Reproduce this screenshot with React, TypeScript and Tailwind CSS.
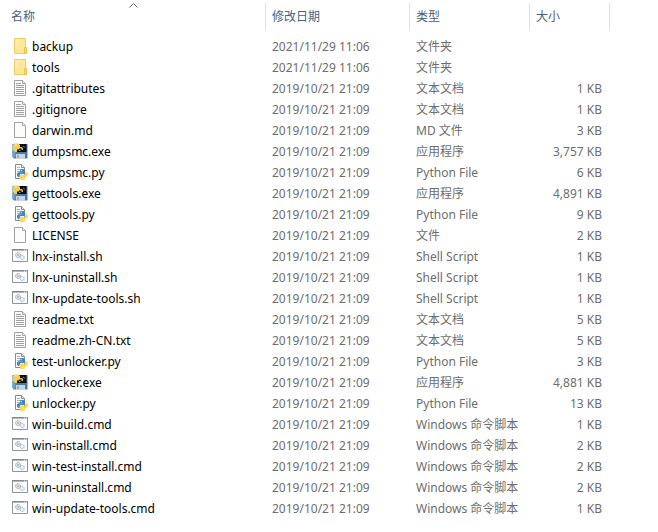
import React, { useState } from 'react'
import clsx from 'clsx'

type IconKind = 'folder' | 'text' | 'blank' | 'exe' | 'python' | 'script'
type ColumnKey = 'name' | 'modified' | 'type' | 'size'

interface FileEntry {
  name: string
  modified: string
  type: string
  size: number | null
  icon: IconKind
}

const FOLDER_DATE = '2021/11/29 11:06'
const FILE_DATE = '2019/10/21 21:09'

const files: FileEntry[] = [
  { name: 'backup', modified: FOLDER_DATE, type: '文件夹', size: null, icon: 'folder' },
  { name: 'tools', modified: FOLDER_DATE, type: '文件夹', size: null, icon: 'folder' },
  { name: '.gitattributes', modified: FILE_DATE, type: '文本文档', size: 1, icon: 'text' },
  { name: '.gitignore', modified: FILE_DATE, type: '文本文档', size: 1, icon: 'text' },
  { name: 'darwin.md', modified: FILE_DATE, type: 'MD 文件', size: 3, icon: 'blank' },
  { name: 'dumpsmc.exe', modified: FILE_DATE, type: '应用程序', size: 3757, icon: 'exe' },
  { name: 'dumpsmc.py', modified: FILE_DATE, type: 'Python File', size: 6, icon: 'python' },
  { name: 'gettools.exe', modified: FILE_DATE, type: '应用程序', size: 4891, icon: 'exe' },
  { name: 'gettools.py', modified: FILE_DATE, type: 'Python File', size: 9, icon: 'python' },
  { name: 'LICENSE', modified: FILE_DATE, type: '文件', size: 2, icon: 'blank' },
  { name: 'lnx-install.sh', modified: FILE_DATE, type: 'Shell Script', size: 1, icon: 'script' },
  { name: 'lnx-uninstall.sh', modified: FILE_DATE, type: 'Shell Script', size: 1, icon: 'script' },
  { name: 'lnx-update-tools.sh', modified: FILE_DATE, type: 'Shell Script', size: 1, icon: 'script' },
  { name: 'readme.txt', modified: FILE_DATE, type: '文本文档', size: 5, icon: 'text' },
  { name: 'readme.zh-CN.txt', modified: FILE_DATE, type: '文本文档', size: 5, icon: 'text' },
  { name: 'test-unlocker.py', modified: FILE_DATE, type: 'Python File', size: 3, icon: 'python' },
  { name: 'unlocker.exe', modified: FILE_DATE, type: '应用程序', size: 4881, icon: 'exe' },
  { name: 'unlocker.py', modified: FILE_DATE, type: 'Python File', size: 13, icon: 'python' },
  { name: 'win-build.cmd', modified: FILE_DATE, type: 'Windows 命令脚本', size: 1, icon: 'script' },
  { name: 'win-install.cmd', modified: FILE_DATE, type: 'Windows 命令脚本', size: 2, icon: 'script' },
  { name: 'win-test-install.cmd', modified: FILE_DATE, type: 'Windows 命令脚本', size: 2, icon: 'script' },
  { name: 'win-uninstall.cmd', modified: FILE_DATE, type: 'Windows 命令脚本', size: 2, icon: 'script' },
  { name: 'win-update-tools.cmd', modified: FILE_DATE, type: 'Windows 命令脚本', size: 1, icon: 'script' }
]

const columns: { key: ColumnKey; label: string; width: string }[] = [
  { key: 'name', label: '名称', width: 'w-[266px]' },
  { key: 'modified', label: '修改日期', width: 'w-36' },
  { key: 'type', label: '类型', width: 'w-30' },
  { key: 'size', label: '大小', width: 'w-20' }
]

const FolderIcon: React.FC = () => (
  <>
    <path d="M2.5.5h11v15h-11z" fill="#ffe699" stroke="#f0cd5c" />
    <path d="M3 1h6L3 11z" fill="#ffedb0" />
    <path d="M12.5 9.5h2v6h-2z" fill="#ffe08a" stroke="#e8c04a" />
  </>
)

const PageShape: React.FC = () => (
  <>
    <path d="M2.5.5h8l3 3v12h-11z" fill="#fcfcfc" stroke="#a0a0a0" />
    <path d="M10.5.5v3h3" fill="#ececec" stroke="#a6a6a6" />
  </>
)

const TextIcon: React.FC = () => (
  <>
    <PageShape />
    <path d="M4 3.5h5M4 5.5h8M4 7.5h8M4 9.5h8M4 11.5h8M4 13.5h8" stroke="#a0a0a0" />
  </>
)

// Two interlocking snakes, drawn in a 16x16 box
const PythonMark: React.FC = () => (
  <>
    <path
      d="M7.8 0C4.8 0 4.2 1.2 4.2 2.6v1.6h4v.7H2.6C.9 4.9 0 6.3 0 8.2s.9 3.3 2.4 3.3h1.4V9.6c0-1.5 1.2-2.5 2.6-2.5h3.4c1.2 0 2-.9 2-2.1V2.6C11.8 1 10.5 0 7.8 0z"
      fill="#3f84c4"
    />
    <path
      d="M8.2 16c3 0 3.6-1.2 3.6-2.6v-1.6h-4v-.7h5.6c1.7 0 2.6-1.4 2.6-3.3s-.9-3.3-2.4-3.3h-1.4v1.9c0 1.5-1.2 2.5-2.6 2.5H6.2c-1.2 0-2 .9-2 2.1v2.4C4.2 15 5.5 16 8.2 16z"
      fill="#ffd748"
    />
    <circle cx="6.1" cy="2.3" r=".8" fill="#fff" />
    <circle cx="9.9" cy="13.7" r=".8" fill="#fff" />
  </>
)

const PythonIcon: React.FC = () => (
  <>
    <path d="M3.5.5h6l3 3v11h-9z" fill="#fafafa" stroke="#858a90" />
    <path d="M9.5.5v3h3" fill="#e3e3e3" stroke="#858a90" />
    <path d="M5 3.5h3M5 5.5h6M5 7.5h3M5 9.5h1M5 11.5h1" stroke="#b0b3b6" />
    <svg x="5" y="5" width="11" height="11" viewBox="0 0 16 16">
      <PythonMark />
    </svg>
  </>
)

const ExeIcon: React.FC = () => (
  <>
    <path d="M.5 1H15a.5.5 0 0 1 .5.5V15a.5.5 0 0 1-.5.5H2L.5 14z" fill="#3f7cb2" />
    <path d="M.5 8h3v6.500h-2L.5 13.500z" fill="#6ba1cf" />
    <path d="M5 1h9.500v8H5z" fill="#0c0c0c" />
    <path d="M2 .5h4.500L8 2v3L6.500 6.500H5V9H3L1 7V2z" fill="#f4cf49" />
    <path d="M3 1.500h2v1H3z" fill="#fff3b0" />
    <path d="M8 4h2l1 1v2H9.500V5.500H8z" fill="#e3bd3d" />
    <path d="M11 3l2 1.500" stroke="#747474" />
    <path d="M7 7.500h1.500" stroke="#b99a35" />
    <path d="M4 11h9v5H4z" fill="#cbd3d9" />
    <path d="M5 12h2v3H5z" fill="#a2afb9" />
  </>
)

const ScriptIcon: React.FC = () => (
  <>
    <path d="M.5 1.5h15v12H.5z" fill="#fcfcfc" stroke="#8f9499" />
    <path d="M0 1.5h16" stroke="#858a8f" />
    <path d="M1 2.500h14" stroke="#b3b7ba" />
    <path d="M12 2h1M14 2h1" stroke="#f4f4f4" />
    <circle cx="6" cy="7" r="2.400" fill="#ececec" stroke="#9a9ea2" strokeDasharray="1.300 .5" />
    <circle cx="6" cy="7" r=".8" fill="#fff" stroke="#8d9297" strokeWidth=".6" />
    <circle cx="10.200" cy="9.500" r="2" fill="#e4f2fb" stroke="#8dbbd8" strokeDasharray="1.200 .4" />
    <circle cx="10.200" cy="9.500" r=".6" fill="#fff" />
  </>
)

const iconShapes: Record<IconKind, React.FC> = {
  folder: FolderIcon,
  text: TextIcon,
  blank: PageShape,
  exe: ExeIcon,
  python: PythonIcon,
  script: ScriptIcon
}

const FileIcon: React.FC<{ kind: IconKind }> = ({ kind }) => {
  const Shape = iconShapes[kind]
  return (
    <svg className="mb-px size-4 shrink-0" viewBox="0 0 16 16" aria-hidden="true">
      <Shape />
    </svg>
  )
}

const compareEntries = (a: FileEntry, b: FileEntry, key: ColumnKey) => {
  if (key === 'size') return (a.size ?? 0) - (b.size ?? 0)
  return a[key].localeCompare(b[key], 'zh-CN')
}

const App: React.FC = () => {
  const [sortKey, setSortKey] = useState<ColumnKey>('name')
  const [ascending, setAscending] = useState(true)

  const handleSort = (key: ColumnKey) => {
    setAscending(key === sortKey ? !ascending : true)
    setSortKey(key)
  }

  // Folders always stay above files
  const rows = [...files].sort((a, b) => {
    const folderOrder = Number(b.icon === 'folder') - Number(a.icon === 'folder')
    if (folderOrder !== 0) return folderOrder
    return compareEntries(a, b, sortKey) * (ascending ? 1 : -1)
  })

  return (
    <main className="min-h-screen bg-white font-['Noto_Sans','Noto_Sans_CJK_SC',sans-serif] text-xs">
      <table className="w-full table-fixed border-collapse text-left whitespace-nowrap">
        <thead>
          <tr>
            {columns.map(({ key, label, width }) => (
              <th
                key={key}
                className={clsx('relative p-0 pt-[3px] pb-1.5 font-normal', width)}
                aria-sort={sortKey !== key ? undefined : ascending ? 'ascending' : 'descending'}
              >
                <button
                  onClick={() => handleSort(key)}
                  className={clsx(
                    'flex h-[27px] w-full items-center border-r border-[#e2e2e2] text-[#4c607a]',
                    key === 'name' ? 'pl-[11px]' : 'pl-1.5'
                  )}
                >
                  {label}
                </button>
                {sortKey === key && (
                  <svg
                    className={clsx('absolute inset-x-1 top-[3px] mx-auto h-[5px] w-[9px]', !ascending && 'rotate-180')}
                    viewBox="0 0 9 5"
                    aria-hidden="true"
                  >
                    <path d="M.5 4.5l4-4 4 4" fill="none" stroke="#6b6b6b" />
                  </svg>
                )}
              </th>
            ))}
            <td />
          </tr>
        </thead>
        <tbody className="text-[#6d6d6d]">
          {rows.map((file) => (
            <tr key={file.name} className="h-[21px] hover:bg-[#e5f3ff]">
              <td className="p-0 pl-3 text-black">
                <div className="flex h-[21px] items-center gap-1">
                  <FileIcon kind={file.icon} />
                  <span className="truncate">{file.name}</span>
                </div>
              </td>
              <td className="p-0 pl-1.5">{file.modified}</td>
              <td className="p-0 pl-1.5">{file.type}</td>
              <td className="p-0 pr-2 text-right">
                {file.size !== null && `${file.size.toLocaleString('en-US')} KB`}
              </td>
              <td />
            </tr>
          ))}
        </tbody>
      </table>
    </main>
  )
}

export default App
